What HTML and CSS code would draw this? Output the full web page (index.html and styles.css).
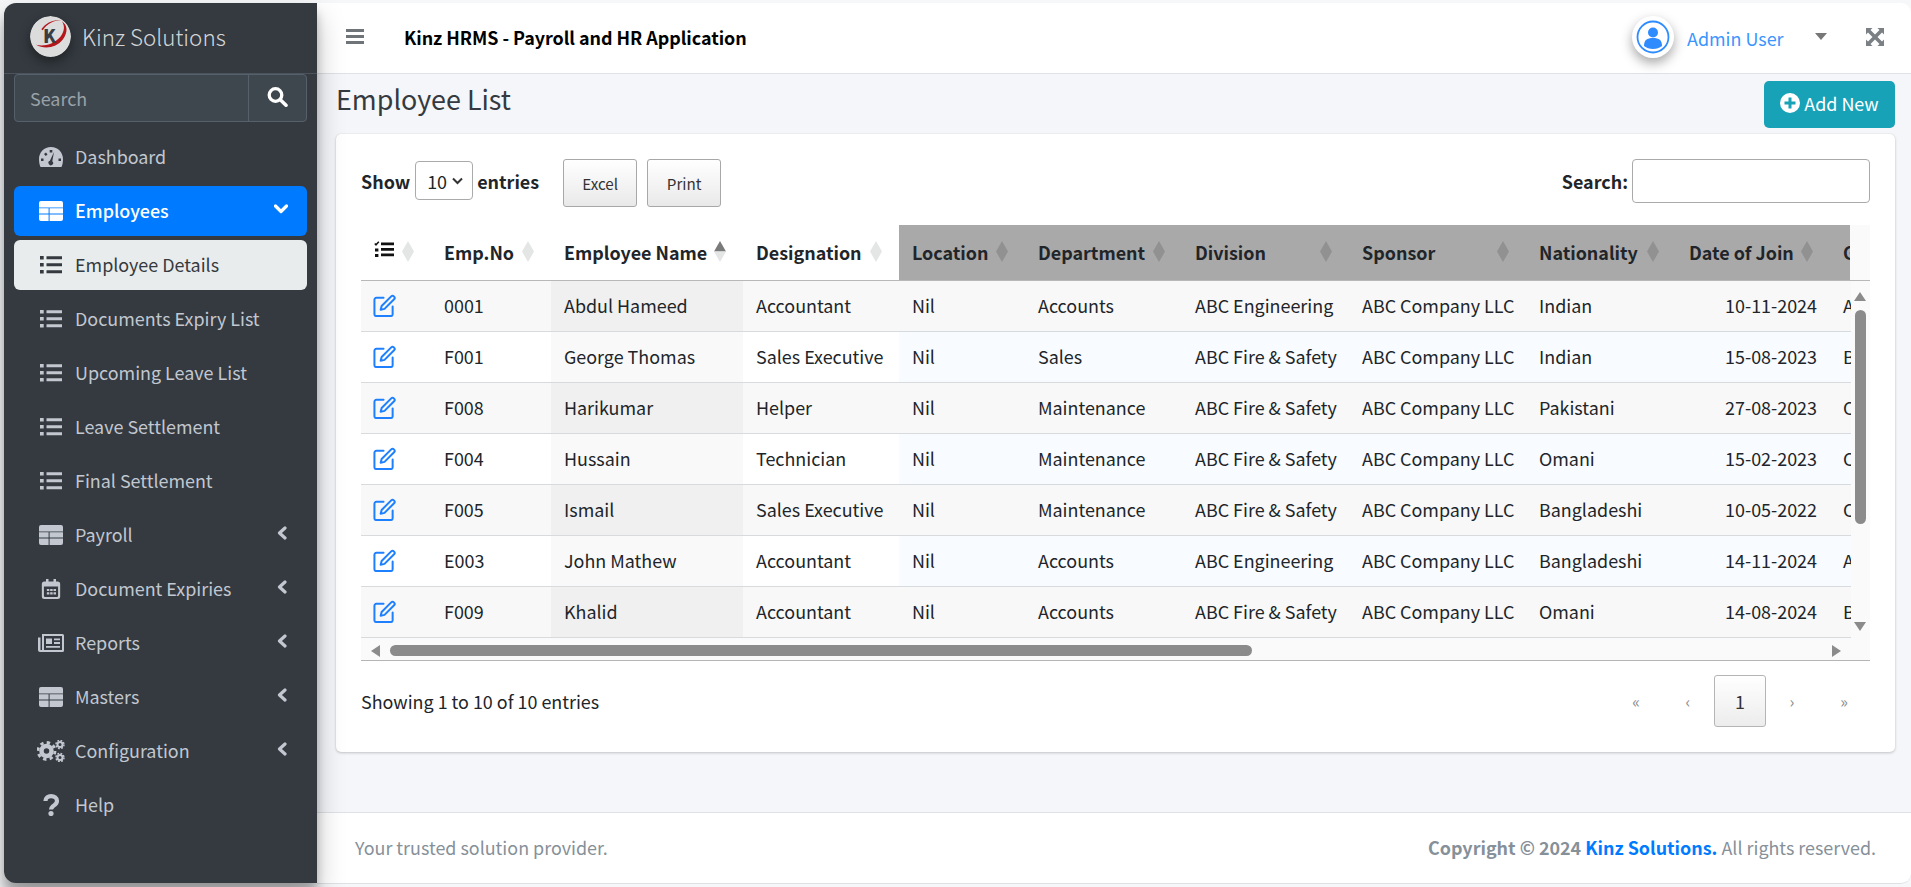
FILE: index.html
```html
<!DOCTYPE html>
<html lang="en">
<head>
<meta charset="utf-8">
<title>Employee List</title>
<link rel="stylesheet" href="styles.css">
</head>
<body>
<svg class="defs" aria-hidden="true" width="0" height="0">
  <symbol id="i-table" viewBox="0 0 24 20"><path d="M2 0h20a2 2 0 0 1 2 2v4.500H0V2a2 2 0 0 1 2-2zM0 7.300h9.600v5.300H0zM10.600 7.300H24v5.300H10.600zM0 13.400h9.600V20H2a2 2 0 0 1-2-2zM10.600 13.400H24V18a2 2 0 0 1-2 2H10.600z"/></symbol>
  <symbol id="i-list" viewBox="0 0 24 20"><path d="M1 1h3.700v3.500H1zM1 8h3.700v3.500H1zM1 15h3.700v3.500H1zM7.500 1.200H23v3H7.500zM7.500 8.200H23v3H7.500zM7.500 15.200H23v3H7.500z"/></symbol>
  <symbol id="i-chev" viewBox="0 0 10 14"><path d="M8 2 2.500 7 8 12" fill="none" stroke="currentColor" stroke-width="3.200" stroke-linecap="round" stroke-linejoin="round"/></symbol>
  <symbol id="i-edit" viewBox="0 0 24 24"><path d="M11 4H3.500A2 2 0 0 0 1.500 6v15a2 2 0 0 0 2 2h15a2 2 0 0 0 2-2v-8M9 12.500 19 2.500a2 2 0 0 1 2.800 0l.2.200a2 2 0 0 1 0 2.800L12 15.500l-4 1z" fill="none" stroke="currentColor" stroke-width="2.100" stroke-linejoin="round" stroke-linecap="round"/></symbol>
  <symbol id="i-sort" viewBox="0 0 12 21"><path d="M6 0 12 10.500 6 21 0 10.500z"/></symbol>
</svg>
<div class="app">
  <aside class="sidebar">
    <div class="brand">
      <svg class="logo" viewBox="0 0 40 40" aria-hidden="true">
        <circle cx="20" cy="20" r="20" fill="#dcdcdc"/>
        <path d="M6 28C14 33 26 31 32 23 37 16 37 9 31 5 35 10 33 17 28 22 22 28 13 30 6 28z" fill="#b3161b"/>
        <path d="M11 13C15 7 23 3 31 4 24 4 16 8 12.500 14z" fill="#b3161b"/>
        <text class="logo-k" x="19" y="26.500" text-anchor="middle">K</text>
      </svg>
      <span class="brand-name">Kinz Solutions</span>
    </div>
    <div class="side-search">
      <span class="side-search-text">Search</span>
      <span class="side-search-btn">
        <svg width="21" height="20" viewBox="0 0 21 20" aria-hidden="true"><circle cx="8.500" cy="8" r="6.300" fill="none" stroke="#fff" stroke-width="3.300"/><path d="m13.300 12.800 5.700 5.400" stroke="#fff" stroke-width="3.600" stroke-linecap="round"/></svg>
      </span>
    </div>
    <nav class="nav">
      <a class="nav-item">
        <svg class="nav-icon" viewBox="0 0 24 20" aria-hidden="true"><path fill-rule="evenodd" d="M12 0c7 0 12 5.500 12 12 0 3-.5 6-1.500 8h-21C.5 18 0 15 0 12 0 5.500 5 0 12 0zm1.300 3h-2.600v2.500h2.600zM7 5.500 5 7l1.700 2L8.500 7.500zM15 5 13.300 14.200a2.300 2.300 0 1 1-2.400-.4zM4.500 11.500H2V14h2.500zM22 11.500h-2.500V14H22z"/></svg>
        <span>Dashboard</span>
      </a>
      <a class="nav-item nav-active">
        <svg class="nav-icon"><use href="#i-table"/></svg>
        <span>Employees</span>
        <svg class="chev-down" viewBox="0 0 14 10" aria-hidden="true"><path d="M1.500 2 7 7.500 12.500 2" fill="none" stroke="currentColor" stroke-width="3.200" stroke-linecap="round" stroke-linejoin="round"/></svg>
      </a>
      <a class="nav-item nav-current">
        <svg class="nav-icon"><use href="#i-list"/></svg>
        <span>Employee Details</span>
      </a>
      <a class="nav-item"><svg class="nav-icon"><use href="#i-list"/></svg><span>Documents Expiry List</span></a>
      <a class="nav-item"><svg class="nav-icon"><use href="#i-list"/></svg><span>Upcoming Leave List</span></a>
      <a class="nav-item"><svg class="nav-icon"><use href="#i-list"/></svg><span>Leave Settlement</span></a>
      <a class="nav-item"><svg class="nav-icon"><use href="#i-list"/></svg><span>Final Settlement</span></a>
      <a class="nav-item"><svg class="nav-icon"><use href="#i-table"/></svg><span>Payroll</span><svg class="chev"><use href="#i-chev"/></svg></a>
      <a class="nav-item">
        <svg class="nav-icon" viewBox="0 0 24 24" aria-hidden="true"><path fill-rule="evenodd" d="M6 0h3v3h6V0h3v3h2a3 3 0 0 1 3 3v15a3 3 0 0 1-3 3H4a3 3 0 0 1-3-3V6a3 3 0 0 1 3-3h2zM3.500 9v11.500c0 .6.400 1 1 1h15c.6 0 1-.4 1-1V9zM7 12h3v2.500H7zM11 12h3v2.500h-3zM15 12h3v2.500h-3zM7 16h3v2.500H7zM11 16h3v2.500h-3zM15 16h3v2.500h-3z"/></svg>
        <span>Document Expiries</span><svg class="chev"><use href="#i-chev"/></svg>
      </a>
      <a class="nav-item">
        <svg class="nav-icon nav-icon-news" viewBox="0 0 26 18" aria-hidden="true"><path fill-rule="evenodd" d="M4 0h20.500A1.500 1.500 0 0 1 26 1.500v15a1.500 1.500 0 0 1-1.500 1.500H2a2 2 0 0 1-2-2V3.500h2.500V16H4zm2 2v14h18V2zm2 2.500h6V10H8zm8 0h6v1.800h-6zm0 3.500h6v2h-6zM8 12h14v1.800H8z"/></svg>
        <span>Reports</span><svg class="chev"><use href="#i-chev"/></svg>
      </a>
      <a class="nav-item"><svg class="nav-icon"><use href="#i-table"/></svg><span>Masters</span><svg class="chev"><use href="#i-chev"/></svg></a>
      <a class="nav-item">
        <svg class="nav-icon nav-icon-wide" viewBox="0 0 28 22" aria-hidden="true"><g><circle cx="9.500" cy="11" r="5" fill="none" stroke="currentColor" stroke-width="4.500"/><circle cx="9.500" cy="11" r="8.500" fill="none" stroke="currentColor" stroke-width="2.800" stroke-dasharray="3.400 3.270"/><circle cx="23" cy="4.500" r="2.500" fill="none" stroke="currentColor" stroke-width="2"/><circle cx="23" cy="4.500" r="4" fill="none" stroke="currentColor" stroke-width="1.500" stroke-dasharray="1.800 1.340"/><circle cx="23" cy="17.500" r="2.500" fill="none" stroke="currentColor" stroke-width="2"/><circle cx="23" cy="17.500" r="4" fill="none" stroke="currentColor" stroke-width="1.500" stroke-dasharray="1.800 1.340"/></g></svg>
        <span>Configuration</span><svg class="chev"><use href="#i-chev"/></svg>
      </a>
      <a class="nav-item">
        <svg class="nav-icon nav-icon-tall" viewBox="0 0 24 22" aria-hidden="true"><path d="M6.500 7C6.500 3.700 9 2.200 12 2.200c3.500 0 6 1.800 6 4.800 0 3-2.800 4-4.300 5.500-1 1-1.700 2-1.700 3" fill="none" stroke="currentColor" stroke-width="4.200"/><circle cx="12" cy="19.500" r="2.600"/></svg>
        <span>Help</span>
      </a>
    </nav>
  </aside>

  <div class="main">
    <header class="topbar">
      <svg class="burger" viewBox="0 0 18 15" aria-hidden="true"><path d="M0 0h18v3H0zM0 6h18v3H0zM0 12h18v3H0z"/></svg>
      <span class="app-title">Kinz HRMS - Payroll and HR Application</span>
      <div class="topbar-right">
        <span class="avatar">
          <svg viewBox="0 0 34 34" aria-hidden="true"><circle cx="17" cy="17" r="15.500" fill="#fff" stroke="#2f8cff" stroke-width="1.800"/><circle cx="17" cy="12.500" r="5" fill="#2f8cff"/><path d="M8 26c0-6 3-8 9-8s9 2 9 8c-2.500 2-5.500 3-9 3s-6.500-1-9-3z" fill="#2f8cff"/></svg>
        </span>
        <span class="user-name">Admin User</span>
        <span class="caret"></span>
        <svg class="expand" viewBox="0 0 18 18" aria-hidden="true"><path d="M0 0h6.500L4.500 2l4.500 4.500L13.500 2l-2-2H18v6.500l-2-2L11.500 9l4.500 4.500 2-2V18h-6.500l2-2L9 11.500 4.500 16l2 2H0v-6.500l2 2L6.500 9 2 4.500l-2 2z"/></svg>
      </div>
    </header>

    <main class="content">
      <div class="page-head">
        <h1 class="page-title">Employee List</h1>
        <a class="btn-add">
          <svg width="20" height="20" viewBox="0 0 20 20" aria-hidden="true"><circle cx="10" cy="10" r="10" fill="#fff"/><path d="M8.500 4.500h3v4h4v3h-4v4h-3v-4h-4v-3h4z" fill="#17a2b8"/></svg>
          <span>Add New</span>
        </a>
      </div>

      <section class="card">
        <div class="tools">
          <label class="length">Show <span class="select"><span>10</span><svg width="11" height="8" viewBox="0 0 11 8" aria-hidden="true"><path d="M1 1.500l4.500 4.500L10 1.500" fill="none" stroke="#333" stroke-width="2"/></svg></span> entries</label>
          <a class="dt-btn">Excel</a>
          <a class="dt-btn">Print</a>
          <label class="filter">Search:<span class="filter-input"></span></label>
        </div>

        <div class="grid-wrap">
          <div class="grid-head">
            <table class="dt">
              <colgroup><col class="c1"><col class="c2"><col class="c3"><col class="c4"><col class="c5"><col class="c6"><col class="c7"><col class="c8"><col class="c9"><col class="c10"><col class="c11"></colgroup>
              <thead>
                <tr>
                  <th class="th-fix"><svg class="th-icon" viewBox="0 0 20 17" aria-hidden="true"><path d="M7 1.500h13v2.800H7zM7 7h13v2.800H7zM7 12.500h13v2.800H7zM1 7.500h3.400v3H1zM1 13h3.400v3H1z"/><path d="M.8 2.500 2 3.800 4.800.8" fill="none" stroke="currentColor" stroke-width="1.500"/></svg><svg class="sort"><use href="#i-sort"/></svg></th>
                  <th class="th-fix">Emp.No<svg class="sort"><use href="#i-sort"/></svg></th>
                  <th class="th-fix">Employee Name<svg class="sort sort-asc" viewBox="0 0 12 21" aria-hidden="true"><path d="M6 0 12 10.500H0z" fill="#7a7a7a"/><path d="M0 10.500h12L6 21z" fill="#e4e6e6"/></svg></th>
                  <th class="th-fix">Designation<svg class="sort"><use href="#i-sort"/></svg></th>
                  <th>Location<svg class="sort"><use href="#i-sort"/></svg></th>
                  <th>Department<svg class="sort"><use href="#i-sort"/></svg></th>
                  <th>Division<svg class="sort"><use href="#i-sort"/></svg></th>
                  <th>Sponsor<svg class="sort"><use href="#i-sort"/></svg></th>
                  <th>Nationality<svg class="sort"><use href="#i-sort"/></svg></th>
                  <th>Date of Join<svg class="sort"><use href="#i-sort"/></svg></th>
                  <th>Grade<svg class="sort"><use href="#i-sort"/></svg></th>
                </tr>
              </thead>
            </table>
          </div>
          <div class="grid-body">
            <table class="dt">
              <colgroup><col class="c1"><col class="c2"><col class="c3"><col class="c4"><col class="c5"><col class="c6"><col class="c7"><col class="c8"><col class="c9"><col class="c10"><col class="c11"></colgroup>
              <tbody>
                <tr><td><svg class="edit"><use href="#i-edit"/></svg></td><td>0001</td><td class="sorted">Abdul Hameed</td><td>Accountant</td><td>Nil</td><td>Accounts</td><td>ABC Engineering</td><td>ABC Company LLC</td><td>Indian</td><td class="num">10-11-2024</td><td>A</td></tr>
                <tr><td><svg class="edit"><use href="#i-edit"/></svg></td><td>F001</td><td class="sorted">George Thomas</td><td>Sales Executive</td><td>Nil</td><td>Sales</td><td>ABC Fire &amp; Safety</td><td>ABC Company LLC</td><td>Indian</td><td class="num">15-08-2023</td><td>B</td></tr>
                <tr><td><svg class="edit"><use href="#i-edit"/></svg></td><td>F008</td><td class="sorted">Harikumar</td><td>Helper</td><td>Nil</td><td>Maintenance</td><td>ABC Fire &amp; Safety</td><td>ABC Company LLC</td><td>Pakistani</td><td class="num">27-08-2023</td><td>C</td></tr>
                <tr><td><svg class="edit"><use href="#i-edit"/></svg></td><td>F004</td><td class="sorted">Hussain</td><td>Technician</td><td>Nil</td><td>Maintenance</td><td>ABC Fire &amp; Safety</td><td>ABC Company LLC</td><td>Omani</td><td class="num">15-02-2023</td><td>C</td></tr>
                <tr><td><svg class="edit"><use href="#i-edit"/></svg></td><td>F005</td><td class="sorted">Ismail</td><td>Sales Executive</td><td>Nil</td><td>Maintenance</td><td>ABC Fire &amp; Safety</td><td>ABC Company LLC</td><td>Bangladeshi</td><td class="num">10-05-2022</td><td>C</td></tr>
                <tr><td><svg class="edit"><use href="#i-edit"/></svg></td><td>E003</td><td class="sorted">John Mathew</td><td>Accountant</td><td>Nil</td><td>Accounts</td><td>ABC Engineering</td><td>ABC Company LLC</td><td>Bangladeshi</td><td class="num">14-11-2024</td><td>A</td></tr>
                <tr><td><svg class="edit"><use href="#i-edit"/></svg></td><td>F009</td><td class="sorted">Khalid</td><td>Accountant</td><td>Nil</td><td>Accounts</td><td>ABC Fire &amp; Safety</td><td>ABC Company LLC</td><td>Omani</td><td class="num">14-08-2024</td><td>B</td></tr>
              </tbody>
            </table>
            <div class="vbar"><span class="arrow-up"></span><span class="vthumb"></span><span class="arrow-down"></span></div>
          </div>
          <div class="hbar"><span class="arrow-left"></span><span class="hthumb"></span><span class="arrow-right"></span></div>
        </div>

        <div class="foot-row">
          <span class="info">Showing 1 to 10 of 10 entries</span>
          <div class="pager">
            <span class="pg">«</span><span class="pg">‹</span><span class="pg pg-on">1</span><span class="pg">›</span><span class="pg">»</span>
          </div>
        </div>
      </section>
    </main>

    <footer class="footer">
      <span>Your trusted solution provider.</span>
      <span><b>Copyright © 2024 <a class="foot-link">Kinz Solutions.</a></b> All rights reserved.</span>
    </footer>
  </div>
</div>
</body>
</html>
```
FILE: styles.css
```css
* { box-sizing: border-box; }
html, body { height: 100%; }
body {
  margin: 0;
  padding: 3px 0 3px 4px;
  background: #f6f7f9;
  font-family: "Noto Sans CJK SC", "Source Sans Pro", "Noto Sans", sans-serif;
  font-size: 17.920px;
  line-height: 24px;
  color: #212529;
  overflow: hidden;
}
.defs { position: absolute; }
.app { display: flex; height: 881px; }

.sidebar {
  width: 313px;
  flex: none;
  margin-bottom: 1px;
  background: #343a40;
  border-radius: 12px 0 0 12px;
  box-shadow: 0 14px 28px rgba(0,0,0,.25), 0 10px 10px rgba(0,0,0,.22);
  position: relative;
  z-index: 2;
}
.brand {
  height: 71px;
  border-bottom: 1px solid #4b545c;
  display: flex;
  align-items: center;
  padding: 0 0 3px 26px;
  gap: 11px;
}
.logo {
  width: 41px; height: 41px;
  border-radius: 50%;
  box-shadow: 0 5px 12px rgba(0,0,0,.4);
  flex: none;
}
.logo-k { font-size: 18px; font-weight: 900; fill: #3a3d42; }
.brand-name { font-size: 22.400px; font-weight: 300; color: rgba(255,255,255,.8); margin-bottom: 2px; }
.side-search {
  margin: 0 10px;
  height: 48px;
  display: flex;
  background: #3f474e;
  border: 1px solid #56606a;
  border-radius: 4px;
}
.side-search-text { flex: 1; padding: 11px 15px; color: #9aa2a9; }
.side-search-btn { width: 58px; border-left: 1px solid #56606a; display: flex; align-items: center; justify-content: center; padding-bottom: 2px; }

.nav { padding: 10px 10px 0; display: flex; flex-direction: column; gap: 4px; }
.nav-item {
  height: 50px;
  display: flex;
  align-items: center;
  padding: 0 20px 0 25px;
  border-radius: 6px;
  color: #c2c7d0;
}
.nav-item span { margin-bottom: 2px; }
.nav-icon { width: 24px; height: 20px; fill: currentColor; flex: none; margin-right: 12px; color: #c2c7d0; }
.nav-icon-wide { width: 28px; height: 22px; margin-left: -2px; margin-right: 10px; }
.nav-icon-news { width: 26px; height: 18px; margin-left: -1px; margin-right: 11px; }
.nav-icon-tall { height: 22px; }
.nav-active { background: #007bff; color: #fff; font-weight: 500; }
.nav-active .nav-icon { color: #fff; }
.nav-current { background: #e9ecec; color: #343a40; }
.nav-current .nav-icon { color: #343a40; }
.chev { width: 10px; height: 14px; margin-left: auto; color: #c2c7d0; flex: none; margin-bottom: 4px; }
.chev-down { width: 14px; height: 10px; margin-left: auto; margin-right: -1px; color: #fff; flex: none; margin-bottom: 4px; }

.main { flex: 1; min-width: 0; display: flex; flex-direction: column; }
.topbar {
  height: 71px;
  flex: none;
  background: #fff;
  border-bottom: 1px solid #dee2e6;
  border-top-right-radius: 10px;
  display: flex;
  align-items: center;
  padding: 0 27px 3px 29px;
}
.burger { width: 18px; height: 15px; fill: #6f7479; flex: none; margin-right: 40px; }
.app-title { font-weight: 700; color: #000; letter-spacing: -.03px; }
.topbar-right { margin-left: auto; display: flex; align-items: center; }
.avatar {
  width: 42px; height: 42px; border-radius: 50%; background: #fff;
  box-shadow: 0 5px 12px rgba(0,0,0,.35);
  padding: 4px; margin-right: 13px; display: block;
}
.avatar svg { width: 34px; height: 34px; display: block; }
.user-name { color: #3a95ff; width: 128px; margin-top: 2px; }
.caret { width: 0; height: 0; border: 6px solid transparent; border-top: 7px solid #777; border-bottom: 0; margin-right: 39px; }
.expand { width: 18px; height: 18px; fill: #7b8085; }

.content { flex: 1; background: #f4f6f9; padding: 7px 16px 0 19px; min-height: 0; }
.page-head { display: flex; justify-content: space-between; align-items: flex-start; height: 53px; }
.page-title { margin: -1px 0 0; font-size: 26.880px; line-height: 38px; font-weight: 400; color: #343a40; }
.btn-add {
  width: 131px; height: 47px;
  background: #17a2b8;
  color: #fff;
  border-radius: 5px;
  display: flex; align-items: center; justify-content: center; gap: 4px;
  padding-bottom: 3px;
}
.card {
  height: 618px;
  background: #fff;
  border-radius: 5px;
  box-shadow: 0 0 1px rgba(0,0,0,.125), 0 1px 3px rgba(0,0,0,.2);
  padding: 25px 25px 0 25px;
}
.tools { display: flex; align-items: flex-start; height: 66px; }
.length { font-weight: 700; display: flex; align-items: center; gap: 4px; height: 39px; margin-top: 2px; }
.select {
  width: 58px; height: 39px; margin-left: 1px;
  border: 1px solid #aaa; border-radius: 4px;
  display: flex; align-items: center; justify-content: space-between;
  font-weight: 400; padding: 0 9px 0 11px;
}
.dt-btn {
  height: 48px; width: 74px; margin-left: 24px;
  border: 1px solid #a8a8a8; border-radius: 3px;
  background: linear-gradient(#fff, #e9e9e9);
  display: flex; align-items: center; justify-content: center;
  font-size: 15.200px; color: #333;
}
.dt-btn + .dt-btn { margin-left: 10px; }
.filter { margin-left: auto; font-weight: 700; display: flex; align-items: center; gap: 4px; height: 44px; }
.filter-input { width: 238px; height: 44px; border: 1px solid #aaa; border-radius: 4px; background: #fff; display: block; }

.grid-wrap { width: 1509px; border-bottom: 1px solid #b5b5b5; background: #fafafa; }
.grid-head { width: 1489px; height: 55px; overflow: hidden; background: #fff; }
.grid-body { position: relative; height: 361px; overflow: hidden; border-top: 1px solid #b8b8b8; background: #fafafa; }
.dt { table-layout: fixed; border-collapse: separate; border-spacing: 0; width: 1569px; }
.c1 { width: 70px; } .c2 { width: 120px; } .c3 { width: 192px; } .c4 { width: 156px; }
.c5 { width: 126px; } .c6 { width: 157px; } .c7 { width: 167px; } .c8 { width: 177px; }
.c9 { width: 150px; } .c10 { width: 154px; } .c11 { width: 100px; }
.dt th {
  height: 55px; padding: 0 0 2px 13px; font-weight: 700; text-align: left;
  background: #a9a9a9; color: #212529; white-space: nowrap; position: relative;
}
.dt th.th-fix { background: #fff; }
.sort { position: absolute; right: 17px; top: 16px; width: 12px; height: 21px; fill: #919191; }
.th-fix .sort { fill: #e4e6e6; }
.th-icon { width: 20px; height: 17px; fill: currentColor; color: #111; display: block; margin-top: -4px; }
.grid-body .dt { position: absolute; left: 0; top: 0; clip-path: inset(0 79px 0 0); }
.dt td {
  height: 51px; padding: 0 0 2px 13px; border-bottom: 1px solid #d8dbde;
  white-space: nowrap; background: #f8f8f8; color: #212529;
}
.dt tr:nth-child(even) td { background: #fff; }
.dt tr:nth-child(even) td:nth-child(n+5) { background: #f8fbff; }
.dt td.sorted { background: #f0f0f0; }
.dt tr:nth-child(even) td.sorted { background: #f9f9f9; }
.dt td.num { text-align: right; padding: 0 13px 2px 0; }
.edit { width: 23px; height: 23px; display: block; color: #1e80ff; margin-left: -1px; }

.vbar { position: absolute; right: 0; top: 0; bottom: 0; width: 19px; background: #fafafa; }
.arrow-up { position: absolute; left: 3px; top: 11px; border: 6.500px solid transparent; border-bottom: 9px solid #8b8b8b; border-top: 0; }
.vthumb { position: absolute; left: 4px; top: 29px; width: 11px; height: 214px; background: #8b8b8b; border-radius: 6px; }
.arrow-down { position: absolute; left: 3px; top: 341px; border: 6.500px solid transparent; border-top: 9px solid #8b8b8b; border-bottom: 0; }
.hbar { position: relative; height: 19px; background: #fafafa; }
.arrow-left { position: absolute; left: 10px; top: 4px; border: 6.500px solid transparent; border-right: 9px solid #8b8b8b; border-left: 0; }
.hthumb { position: absolute; left: 29px; top: 4px; width: 862px; height: 11px; background: #8b8b8b; border-radius: 6px; }
.arrow-right { position: absolute; left: 1471px; top: 4px; border: 6.500px solid transparent; border-left: 9px solid #8b8b8b; border-right: 0; }

.foot-row { display: flex; justify-content: space-between; align-items: center; padding-top: 14px; }
.pager { display: flex; align-items: center; }
.pg { width: 52px; height: 52px; display: flex; align-items: center; justify-content: center; color: #8d8d8d; font-size: 16px; }
.pg-on { border: 1px solid #b5b5b5; border-radius: 3px; background: linear-gradient(#fff, #ececec); color: #333; font-size: 17.920px; }

.footer {
  height: 72px; flex: none;
  background: #fff;
  border-top: 1px solid #dee2e6;
  border-bottom: 1px solid #dee2e6;
  border-bottom-right-radius: 10px;
  display: flex; align-items: center; justify-content: space-between;
  padding: 0 35px 3px 38px;
  color: #869099;
}
.foot-link { color: #007bff; }
```
